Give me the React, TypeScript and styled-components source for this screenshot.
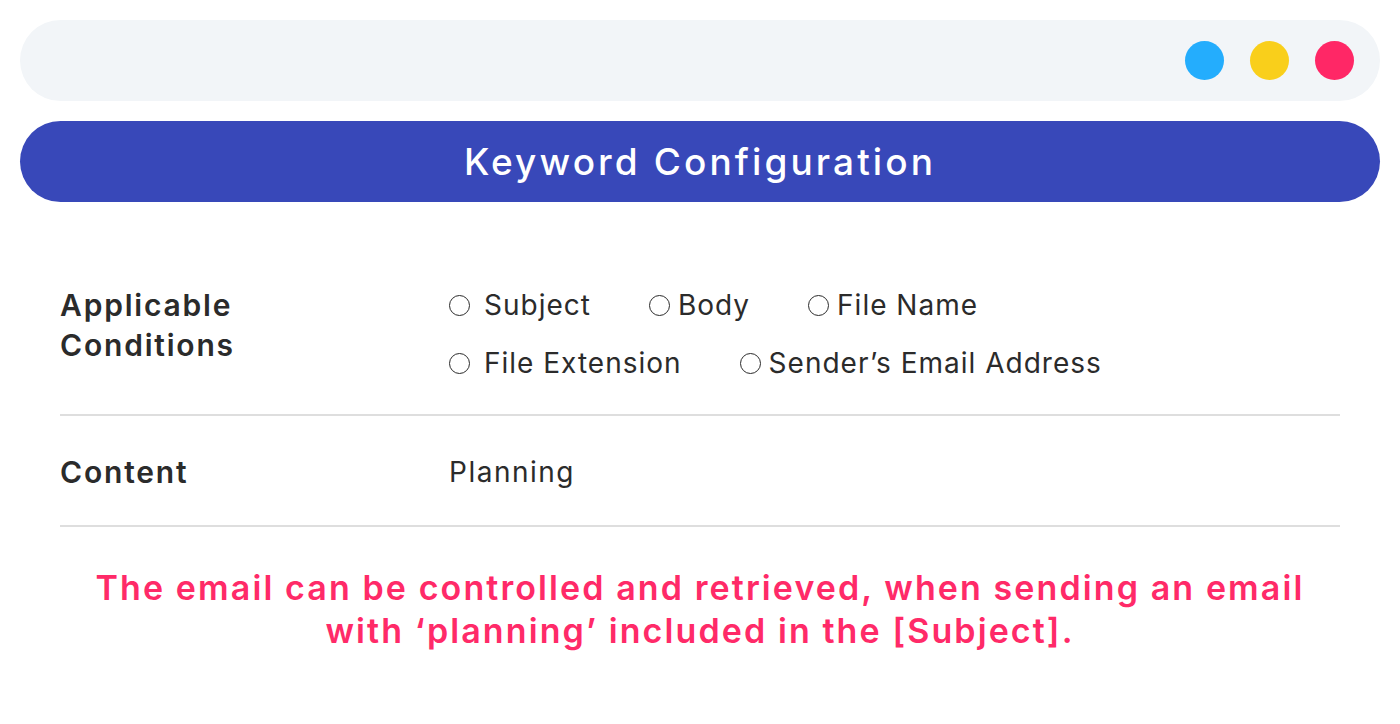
import React from "react";
import styled, { createGlobalStyle } from "styled-components";

const Global = createGlobalStyle`
  html, body { margin: 0; padding: 0; background: #ffffff; }
  body { font-family: "Inter", "Noto Sans", sans-serif; }
`;

const Page = styled.div`
  width: 1400px;
  height: 724px;
  box-sizing: border-box;
  padding: 20px 20px 0 20px;
  display: flex;
  flex-direction: column;
`;

const WindowBar = styled.div`
  height: 81px;
  border-radius: 41px;
  background: #f2f5f8;
  display: flex;
  align-items: center;
  justify-content: flex-end;
  gap: 26px;
  padding-right: 26px;
`;

const Dot = styled.span<{ $color: string }>`
  width: 39px;
  height: 39px;
  border-radius: 50%;
  background: ${(p) => p.$color};
`;

const TitleBar = styled.div`
  margin-top: 20px;
  height: 81px;
  border-radius: 41px;
  background: #3848b9;
  color: #ffffff;
  display: flex;
  align-items: center;
  justify-content: center;
  font-size: 37px;
  font-weight: 500;
  letter-spacing: 3.1px;
`;

const Table = styled.div`
  margin: 83px 40px 0 40px;
  display: flex;
  flex-direction: column;
`;

const Row = styled.div<{ $pad: string }>`
  display: grid;
  grid-template-columns: 389px 1fr;
  align-items: start;
  padding: ${(p) => p.$pad};
  border-bottom: 2px solid #dedede;
`;

const Label = styled.div`
  font-size: 30px;
  font-weight: 600;
  color: #2b2b2b;
  line-height: 40px;
  letter-spacing: 1.8px;
`;

const Options = styled.div`
  display: flex;
  flex-direction: column;
  gap: 18px;
`;

const OptionLine = styled.div`
  display: flex;
  gap: 58px;
`;

const Option = styled.label<{ $spaced?: boolean }>`
  display: flex;
  align-items: center;
  gap: ${(p) => (p.$spaced ? "14px" : "8px")};
  font-size: 28px;
  font-weight: 400;
  color: #2b2b2b;
  line-height: 40px;
  letter-spacing: 1px;
`;

const Radio = styled.span`
  width: 19px;
  height: 19px;
  border: 1.5px solid #2b2b2b;
  border-radius: 50%;
  flex: none;
`;

const Value = styled.div`
  font-size: 28px;
  font-weight: 400;
  color: #2b2b2b;
  line-height: 40px;
  letter-spacing: 1.5px;
`;

const Note = styled.p`
  margin: 39px 0 0 0;
  text-align: center;
  color: #ff2a68;
  font-size: 34px;
  font-weight: 600;
  line-height: 43px;
  letter-spacing: 2.1px;
`;

export default function App() {
  return (
    <>
      <Global />
      <Page>
        <WindowBar>
          <Dot $color="#24adfd" />
          <Dot $color="#f9cf1b" />
          <Dot $color="#ff2766" />
        </WindowBar>
        <TitleBar>Keyword Configuration</TitleBar>
        <Table>
          <Row $pad="0 0 31px 0">
            <Label>
              Applicable
              <br />
              Conditions
            </Label>
            <Options>
              <OptionLine>
                <Option $spaced>
                  <Radio />
                  Subject
                </Option>
                <Option>
                  <Radio />
                  Body
                </Option>
                <Option>
                  <Radio />
                  File Name
                </Option>
              </OptionLine>
              <OptionLine>
                <Option $spaced>
                  <Radio />
                  File Extension
                </Option>
                <Option>
                  <Radio />
                  Sender’s Email Address
                </Option>
              </OptionLine>
            </Options>
          </Row>
          <Row $pad="36px 0 33px 0">
            <Label>Content</Label>
            <Value>Planning</Value>
          </Row>
        </Table>
        <Note>
          The email can be controlled and retrieved, when sending an email
          <br />
          with ‘planning’ included in the [Subject].
        </Note>
      </Page>
    </>
  );
}
